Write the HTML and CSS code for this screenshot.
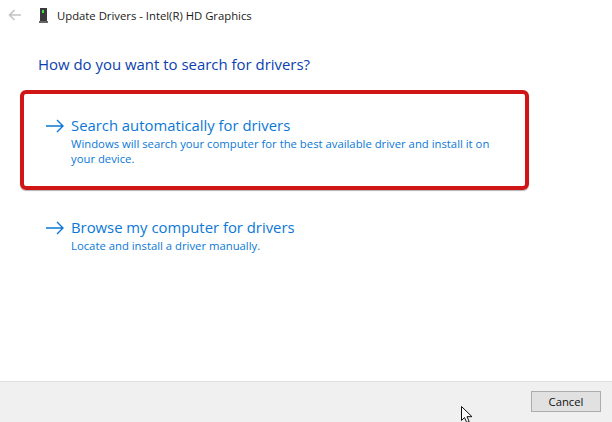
FILE: index.html
```html
<!DOCTYPE html>
<html lang="en">
<head>
<meta charset="utf-8">
<title>Update Drivers</title>
<link rel="stylesheet" href="styles.css">
</head>
<body>
<div class="window">
  <header class="titlebar">
    <svg class="back" width="14" height="12" viewBox="0 0 14 12"><path d="M6.500 1 1.500 6l5 5M1.500 6H13" fill="none" stroke="#c4c4c4" stroke-width="1.600"/></svg>
    <svg class="device" width="9" height="15" viewBox="0 0 9 15"><rect x="1" y="0" width="7" height="13" fill="#3a3a3a"/><rect x="0" y="13" width="9" height="2" fill="#666"/><rect x="3" y="2" width="2" height="3" fill="#3fe24a"/></svg>
    <span class="title">Update Drivers - Intel(R) HD Graphics</span>
  </header>
  <main class="content">
    <h1 class="heading">How do you want to search for drivers?</h1>
    <div class="option option-marked">
      <svg class="arrow" width="18" height="14" viewBox="0 0 18 14"><path d="M11 1l6 6-6 6M0 7h17" fill="none" stroke="#0a78d7" stroke-width="1.400"/></svg>
      <div class="option-text">
        <div class="option-title">Search automatically for drivers</div>
        <div class="option-desc">Windows will search your computer for the best available driver and install it on your device.</div>
      </div>
    </div>
    <div class="option">
      <svg class="arrow" width="18" height="14" viewBox="0 0 18 14"><path d="M11 1l6 6-6 6M0 7h17" fill="none" stroke="#0a78d7" stroke-width="1.400"/></svg>
      <div class="option-text">
        <div class="option-title">Browse my computer for drivers</div>
        <div class="option-desc">Locate and install a driver manually.</div>
      </div>
    </div>
  </main>
  <footer class="footer">
    <button class="cancel" type="button">Cancel</button>
  </footer>
  <svg class="cursor" width="13" height="17" viewBox="0 0 13 17"><path d="M.5.5v14l3-3 2.200 5 2.500-1-2.200-4.800H11z" fill="#fff" stroke="#111" stroke-width="1"/></svg>
</div>
</body>
</html>
```
FILE: styles.css
```css
* { box-sizing: border-box; }
html, body { margin: 0; padding: 0; }
body { font-family: "Open Sans", "Noto Sans", sans-serif; background: #fff; }
.window { position: relative; width: 612px; height: 422px; display: flex; flex-direction: column; overflow: hidden; }
.titlebar { display: flex; align-items: center; height: 30px; padding-left: 8px; }
.back { margin-right: 17px; }
.device { margin-right: 9px; }
.title { font-size: 11.3px; color: #1a1a1a; }
.content { flex: 1; padding: 0 0 0 20px; }
.heading { margin: 23px 0 0 18px; font-weight: 400; font-size: 14.95px; line-height: 22px; color: #0a3fb0; }
.option { display: flex; width: 509px; padding: 17px 0 0 26px; }
.option-marked { height: 100px; margin-top: 15px; padding-left: 22px; padding-top: 21px; border: 4px solid #cf1515; border-radius: 6px; box-shadow: 0 1px 1px rgba(0,0,0,.3); }
.option-marked + .option { margin-top: 10px; }
.arrow { margin-top: 4px; margin-right: 7px; flex: none; }
.option-text { width: 430px; }
.option-title { font-size: 14.85px; line-height: 21px; color: #0a78d7; }
.option-desc { font-size: 11.3px; line-height: 15px; color: #0a78d7; }
.footer { display: flex; justify-content: flex-end; align-items: flex-start; height: 41px; padding: 9px 11px 0 0; background: #f0f0f0; border-top: 1px solid #dfdfdf; }
.cancel { width: 70px; height: 21px; padding: 0; font: 11.3px "Open Sans", "Noto Sans", sans-serif; color: #111; background: #e1e1e1; border: 1px solid #adadad; }
.cursor { position: absolute; left: 461px; top: 406px; }
```
